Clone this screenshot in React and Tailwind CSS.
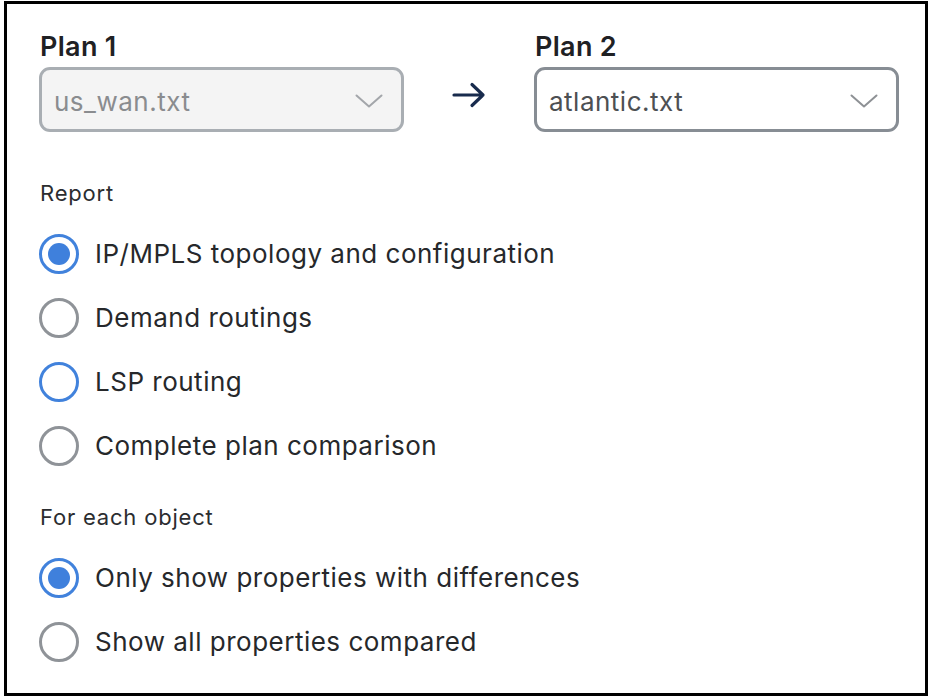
import React from "react";

const font = { fontFamily: "Inter, 'Noto Sans', sans-serif" };

function Chevron({ color }) {
  return (
    <svg width="28" height="14" viewBox="0 0 28 14" fill="none">
      <path d="M1.5 1.5 L14 12.5 L26.5 1.5" stroke={color} strokeWidth="2" strokeLinecap="round" strokeLinejoin="round" />
    </svg>
  );
}

function Radio({ state, label }) {
  let ring = "border-[#8f9398]";
  if (state === "checked" || state === "focus") ring = "border-[#4182dc]";
  return (
    <div className="flex h-[64px] items-center">
      <div className={`flex h-[40px] w-[40px] shrink-0 items-center justify-center rounded-full border-[3px] bg-white ${ring}`}>
        {state === "checked" && <div className="h-[22px] w-[22px] rounded-full bg-[#3f80dc]" />}
      </div>
      <span className="ml-[16px] text-[26px] leading-[30px] tracking-[0.5px] text-[#26282b]">{label}</span>
    </div>
  );
}

export default function App() {
  return (
    <div className="h-[699px] w-[929px] bg-white pl-[4px] pt-[1px]" style={font}>
      <div className="h-[695px] w-[924px] border-[3px] border-black pl-[32px] pt-[28px]">
        <div className="flex items-end">
          <div className="flex w-[365px] flex-col">
            <div className="pl-[1px] text-[27px] font-semibold leading-[30px] tracking-[0.3px] text-[#1f2124]">Plan 1</div>
            <div className="mt-[5px] flex h-[65px] items-center justify-between rounded-[11px] border-[3px] border-[#a9aeb3] bg-[#f4f4f4] pl-[12px] pr-[18px] pt-[3px]">
              <span className="text-[26px] tracking-[0.5px] text-[#8a8c8f]">us_wan.txt</span>
              <Chevron color="#a3a6aa" />
            </div>
          </div>
          <div className="flex h-[65px] w-[130px] items-center justify-center pb-[10px]">
            <svg width="36" height="26" viewBox="0 0 36 26" fill="none">
              <path d="M3 13 H32 M21 2.5 L32 13 L21 23.5" stroke="#182b4d" strokeWidth="3.2" strokeLinecap="round" strokeLinejoin="round" />
            </svg>
          </div>
          <div className="flex w-[365px] flex-col">
            <div className="pl-[1px] text-[27px] font-semibold leading-[30px] tracking-[0.3px] text-[#1f2124]">Plan 2</div>
            <div className="mt-[5px] flex h-[65px] items-center justify-between rounded-[11px] border-[3px] border-[#878d94] bg-white pl-[12px] pr-[18px] pt-[3px]">
              <span className="text-[26px] tracking-[0.5px] text-[#4d5053]">atlantic.txt</span>
              <Chevron color="#8e9195" />
            </div>
          </div>
        </div>
        <div className="mt-[49px] pl-[1px] text-[22px] leading-[24px] tracking-[0.8px] text-[#2b2d30]">Report</div>
        <div className="mt-[17px] flex flex-col">
          <Radio state="checked" label="IP/MPLS topology and configuration" />
          <Radio label="Demand routings" />
          <Radio state="focus" label="LSP routing" />
          <Radio label="Complete plan comparison" />
        </div>
        <div className="mt-[27px] pl-[1px] text-[22px] leading-[24px] tracking-[0.8px] text-[#2b2d30]">For each object</div>
        <div className="mt-[17px] flex flex-col">
          <Radio state="checked" label="Only show properties with differences" />
          <Radio label="Show all properties compared" />
        </div>
      </div>
    </div>
  );
}
